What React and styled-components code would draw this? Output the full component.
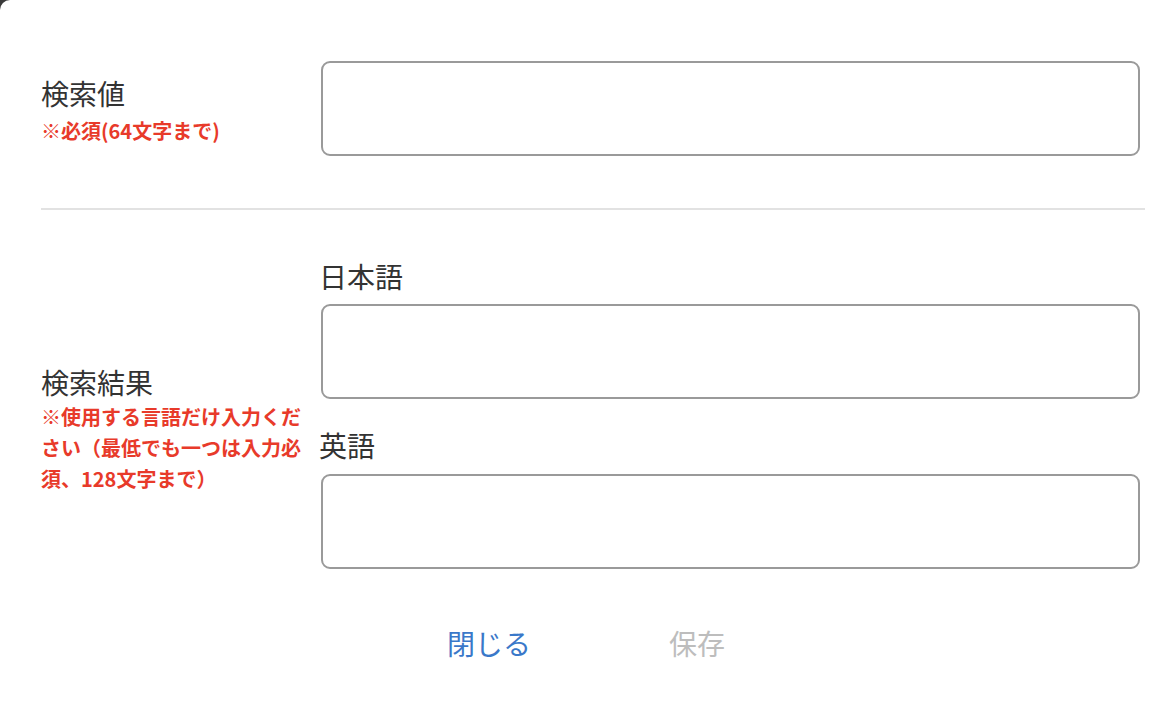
import styled, { createGlobalStyle } from "styled-components";

/* ================= STYLES ================= */

const GlobalStyle = createGlobalStyle`
  html, body {
    margin: 0;
    padding: 0;
    background: #3a3a3a;
  }
  body {
    font-family: "Noto Sans CJK JP", "Noto Sans", sans-serif;
    color: #333;
  }
  * {
    box-sizing: border-box;
  }
`;

const Dialog = styled.div`
  width: 1162px;
  height: 712px;
  background: #ffffff;
  border-top-left-radius: 10px;
  padding: 61px 17px 0 41px;
  overflow: hidden;
`;

const Section = styled.div`
  display: flex;
  align-items: center;
  padding-top: ${(p) => p.$top || 0}px;
  padding-bottom: ${(p) => p.$bottom || 0}px;
`;

const LabelCol = styled.div`
  width: 280px;
  flex-shrink: 0;
  padding-right: 16px;
`;

const FieldCol = styled.div`
  flex: 1;
  padding-right: 5px;
  padding-bottom: ${(p) => p.$bottom || 0}px;
  display: flex;
  flex-direction: column;
`;

const Label = styled.div`
  font-size: 28px;
  line-height: 42px;
  color: #333;
`;

const Note = styled.div`
  font-size: 20px;
  font-weight: 700;
  line-height: 31px;
  color: #e83a2a;
  margin-top: ${(p) => p.$top || 0}px;
`;

const FieldLabel = styled.div`
  font-size: 28px;
  line-height: 42px;
  color: #333;
  margin-left: -2px;
  margin-top: ${(p) => p.$top || 0}px;
  margin-bottom: ${(p) => p.$bottom || 7}px;
`;

const Input = styled.textarea`
  display: block;
  width: 100%;
  height: 95px;
  border: 2px solid #9a9a9a;
  border-radius: 9px;
  resize: none;
  font-size: 24px;
  font-family: inherit;
  padding: 10px 14px;
  outline: none;
`;

const Divider = styled.hr`
  margin: 0;
  border: none;
  height: 2px;
  background: #e2e2e2;
`;

const Buttons = styled.div`
  display: flex;
  justify-content: center;
  margin-top: 23px;
`;

const TextButton = styled.button`
  width: 208px;
  background: none;
  border: none;
  padding: 0;
  font-family: inherit;
  font-size: 28px;
  line-height: 42px;
  color: ${(p) => (p.disabled ? "#bdbdbd" : "#3a78c9")};
  cursor: ${(p) => (p.disabled ? "default" : "pointer")};
`;

/* ================= COMPONENT ================= */

export default function App() {
  return (
    <>
      <GlobalStyle />
      <Dialog>
        <Section $bottom={52}>
          <LabelCol>
            <Label>検索値</Label>
            <Note $top={1}>※必須(64文字まで)</Note>
          </LabelCol>
          <FieldCol>
            <Input />
          </FieldCol>
        </Section>

        <Divider />

        <Section $top={45}>
          <LabelCol>
            <Label>検索結果</Label>
            <Note $top={-2}>
              ※使用する言語だけ入力ください（最低でも一つは入力必須、128文字まで）
            </Note>
          </LabelCol>
          <FieldCol $bottom={30}>
            <FieldLabel>日本語</FieldLabel>
            <Input />
            <FieldLabel $top={25} $bottom={8}>
              英語
            </FieldLabel>
            <Input />
          </FieldCol>
        </Section>

        <Buttons>
          <TextButton>閉じる</TextButton>
          <TextButton disabled>保存</TextButton>
        </Buttons>
      </Dialog>
    </>
  );
}
